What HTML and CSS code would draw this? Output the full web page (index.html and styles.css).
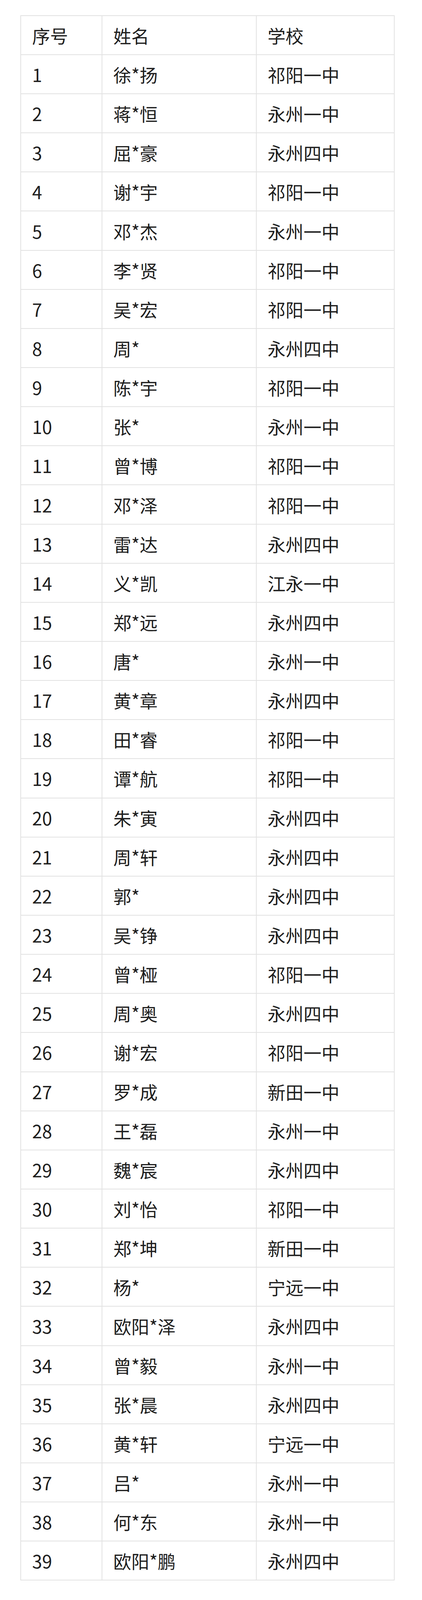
FILE: index.html
```html
<!DOCTYPE html>
<html lang="zh-CN">
<head>
<meta charset="utf-8">
<title>名单</title>
<link rel="stylesheet" href="styles.css">
</head>
<body>
<main class="page">
<div class="list" role="table">
<div class="cell head">序号</div><div class="cell head">姓名</div><div class="cell head">学校</div>
<div class="cell">1</div><div class="cell">徐*扬</div><div class="cell">祁阳一中</div>
<div class="cell">2</div><div class="cell">蒋*恒</div><div class="cell">永州一中</div>
<div class="cell">3</div><div class="cell">屈*豪</div><div class="cell">永州四中</div>
<div class="cell">4</div><div class="cell">谢*宇</div><div class="cell">祁阳一中</div>
<div class="cell">5</div><div class="cell">邓*杰</div><div class="cell">永州一中</div>
<div class="cell">6</div><div class="cell">李*贤</div><div class="cell">祁阳一中</div>
<div class="cell">7</div><div class="cell">吴*宏</div><div class="cell">祁阳一中</div>
<div class="cell">8</div><div class="cell">周*</div><div class="cell">永州四中</div>
<div class="cell">9</div><div class="cell">陈*宇</div><div class="cell">祁阳一中</div>
<div class="cell">10</div><div class="cell">张*</div><div class="cell">永州一中</div>
<div class="cell">11</div><div class="cell">曾*博</div><div class="cell">祁阳一中</div>
<div class="cell">12</div><div class="cell">邓*泽</div><div class="cell">祁阳一中</div>
<div class="cell">13</div><div class="cell">雷*达</div><div class="cell">永州四中</div>
<div class="cell">14</div><div class="cell">义*凯</div><div class="cell">江永一中</div>
<div class="cell">15</div><div class="cell">郑*远</div><div class="cell">永州四中</div>
<div class="cell">16</div><div class="cell">唐*</div><div class="cell">永州一中</div>
<div class="cell">17</div><div class="cell">黄*章</div><div class="cell">永州四中</div>
<div class="cell">18</div><div class="cell">田*睿</div><div class="cell">祁阳一中</div>
<div class="cell">19</div><div class="cell">谭*航</div><div class="cell">祁阳一中</div>
<div class="cell">20</div><div class="cell">朱*寅</div><div class="cell">永州四中</div>
<div class="cell">21</div><div class="cell">周*轩</div><div class="cell">永州四中</div>
<div class="cell">22</div><div class="cell">郭*</div><div class="cell">永州四中</div>
<div class="cell">23</div><div class="cell">吴*铮</div><div class="cell">永州四中</div>
<div class="cell">24</div><div class="cell">曾*桠</div><div class="cell">祁阳一中</div>
<div class="cell">25</div><div class="cell">周*奥</div><div class="cell">永州四中</div>
<div class="cell">26</div><div class="cell">谢*宏</div><div class="cell">祁阳一中</div>
<div class="cell">27</div><div class="cell">罗*成</div><div class="cell">新田一中</div>
<div class="cell">28</div><div class="cell">王*磊</div><div class="cell">永州一中</div>
<div class="cell">29</div><div class="cell">魏*宸</div><div class="cell">永州四中</div>
<div class="cell">30</div><div class="cell">刘*怡</div><div class="cell">祁阳一中</div>
<div class="cell">31</div><div class="cell">郑*坤</div><div class="cell">新田一中</div>
<div class="cell">32</div><div class="cell">杨*</div><div class="cell">宁远一中</div>
<div class="cell">33</div><div class="cell">欧阳*泽</div><div class="cell">永州四中</div>
<div class="cell">34</div><div class="cell">曾*毅</div><div class="cell">永州一中</div>
<div class="cell">35</div><div class="cell">张*晨</div><div class="cell">永州四中</div>
<div class="cell">36</div><div class="cell">黄*轩</div><div class="cell">宁远一中</div>
<div class="cell">37</div><div class="cell">吕*</div><div class="cell">永州一中</div>
<div class="cell">38</div><div class="cell">何*东</div><div class="cell">永州一中</div>
<div class="cell">39</div><div class="cell">欧阳*鹏</div><div class="cell">永州四中</div>
</div>
</main>
</body>
</html>
```
FILE: styles.css
```css
html, body {
  margin: 0;
  padding: 0;
  background: #ffffff;
}
.page {
  padding: 38.75px 0 0 52.3px;
}
.list {
  display: grid;
  grid-template-columns: 207.7px 394.7px 353.3px;
  grid-auto-rows: 100.15px;
  width: max-content;
  border-top: 2px solid #e2e2e2;
  border-left: 2px solid #e2e2e2;
  font-family: "Noto Sans CJK SC", "Noto Sans", sans-serif;
  font-size: 46px;
  line-height: 1;
  color: #1e1e1e;
}
.cell {
  display: flex;
  align-items: center;
  box-sizing: border-box;
  padding-left: 28px;
  border-right: 2px solid #e2e2e2;
  border-bottom: 2px solid #e2e2e2;
  white-space: nowrap;
}
```
